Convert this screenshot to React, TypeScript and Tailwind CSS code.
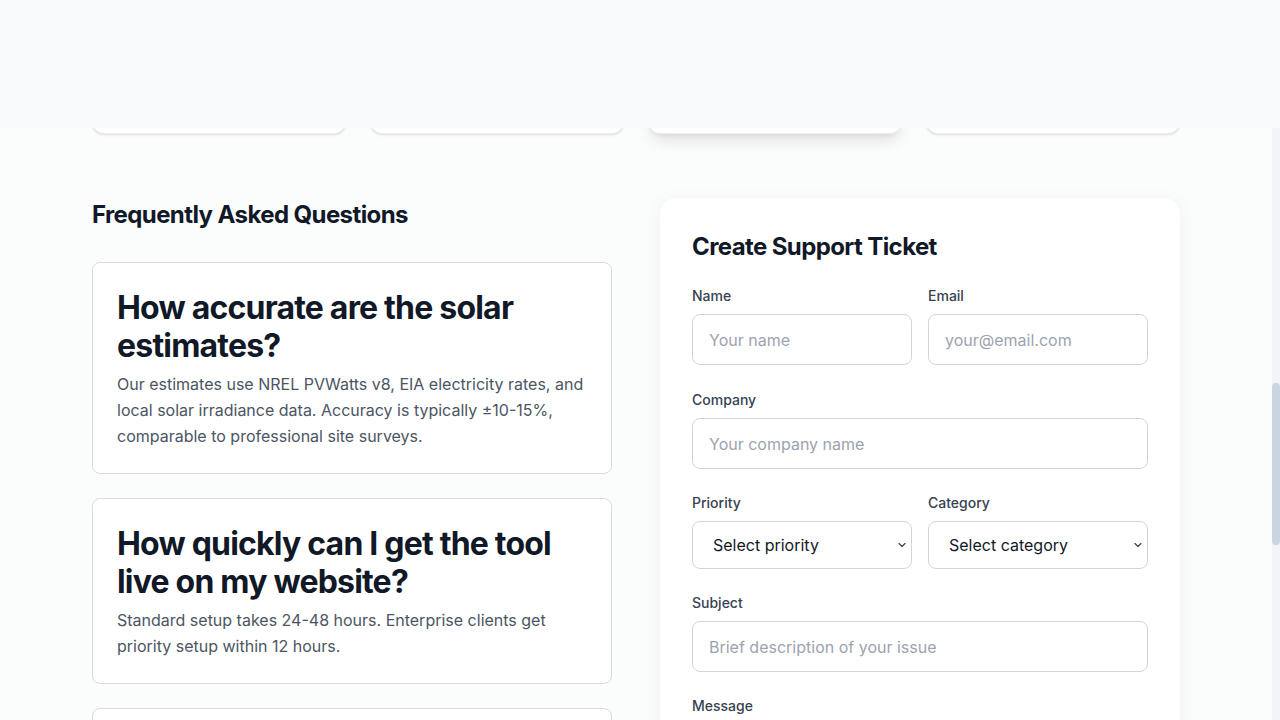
import React from "react";

const faqs = [
  {
    q: "How accurate are the solar estimates?",
    a: "Our estimates use NREL PVWatts v8, EIA electricity rates, and local solar irradiance data. Accuracy is typically ±10-15%, comparable to professional site surveys.",
  },
  {
    q: "How quickly can I get the tool live on my website?",
    a: "Standard setup takes 24-48 hours. Enterprise clients get priority setup within 12 hours.",
  },
  {
    q: "Can I customize the calculator to match my brand?",
    a: "Yes. Colors, logos, fonts and copy can all be customized to match your website.",
  },
];

function Label({ children }: { children: React.ReactNode }) {
  return <label className="mb-2 block text-sm font-medium leading-5 text-[#374151]">{children}</label>;
}

function Input({ placeholder }: { placeholder: string }) {
  return (
    <input
      placeholder={placeholder}
      className="block h-[51px] w-full rounded-lg border border-[#d1d5db] bg-white px-4 text-base text-[#111827] placeholder:text-[#9ca3af] outline-none"
    />
  );
}

function Select({ label }: { label: string }) {
  return (
    <div className="relative">
      <select className="block h-[48px] w-full appearance-none rounded-lg border border-[#d1d5db] bg-white pl-5 pr-8 text-base text-[#111827] outline-none">
        <option>{label}</option>
      </select>
      <svg
        className="pointer-events-none absolute right-[6px] top-1/2 -translate-y-1/2"
        width="8"
        height="5"
        viewBox="0 0 8 5"
        fill="none"
      >
        <path d="M1 1l3 3 3-3" stroke="#374151" strokeWidth="1.2" strokeLinecap="round" strokeLinejoin="round" />
      </svg>
    </div>
  );
}

export default function App() {
  return (
    <div className="flex h-screen w-full flex-col overflow-hidden bg-[#fbfcfc]" style={{ fontFamily: "Inter, 'Noto Sans', sans-serif" }}>
      <div className="h-32 w-full shrink-0 bg-[#f9fafb]" />
      <div className="flex min-h-0 flex-1">
        <div className="min-w-0 flex-1 overflow-hidden">
          <div className="mx-auto max-w-6xl px-8 -mt-[194px]">
            <div className="grid grid-cols-4 gap-6">
              <div className="h-[200px] rounded-xl border border-[#eceef1] bg-white shadow-sm" />
              <div className="h-[200px] rounded-xl border border-[#eceef1] bg-white shadow-sm" />
              <div className="h-[200px] rounded-xl border border-[#eceef1] bg-white shadow-lg" />
              <div className="h-[200px] rounded-xl border border-[#eceef1] bg-white shadow-sm" />
            </div>
            <div className="grid grid-cols-2 gap-12 pt-16">
              <div>
                <h2 className="mb-[31px] pt-px text-2xl font-bold leading-8 tracking-tight text-[#111827]">Frequently Asked Questions</h2>
                <div className="flex flex-col gap-6">
                  {faqs.map((f) => (
                    <div key={f.q} className="rounded-lg border border-[#d9dce1] bg-white p-6">
                      <h3 className="mb-1.5 pt-0.5 text-[32px] font-bold leading-[38px] tracking-tight text-[#111827]">{f.q}</h3>
                      <p className="text-base leading-[26px] text-[#4b5563]">{f.a}</p>
                    </div>
                  ))}
                </div>
              </div>
              <div className="rounded-2xl bg-white px-8 pb-8 pt-[33px] shadow-[0_4px_20px_rgba(0,0,0,0.05)]">
                <h2 className="mb-[23px] text-2xl font-bold leading-8 tracking-tight text-[#111827]">Create Support Ticket</h2>
                <div className="flex flex-col gap-6">
                  <div className="mb-px grid grid-cols-2 gap-4">
                    <div>
                      <Label>Name</Label>
                      <Input placeholder="Your name" />
                    </div>
                    <div>
                      <Label>Email</Label>
                      <Input placeholder="your@email.com" />
                    </div>
                  </div>
                  <div>
                    <Label>Company</Label>
                    <Input placeholder="Your company name" />
                  </div>
                  <div className="grid grid-cols-2 gap-4">
                    <div>
                      <Label>Priority</Label>
                      <Select label="Select priority" />
                    </div>
                    <div>
                      <Label>Category</Label>
                      <Select label="Select category" />
                    </div>
                  </div>
                  <div>
                    <Label>Subject</Label>
                    <Input placeholder="Brief description of your issue" />
                  </div>
                  <div>
                    <Label>Message</Label>
                    <textarea
                      rows={5}
                      placeholder="Describe your issue in detail"
                      className="block w-full rounded-lg border border-[#d1d5db] bg-white px-4 py-3 text-base outline-none placeholder:text-[#9ca3af]"
                    />
                  </div>
                </div>
              </div>
            </div>
          </div>
        </div>
        <div className="flex w-2 shrink-0 flex-col bg-[#f1f5f9]">
          <div className="mt-[255px] h-[162px] w-2 rounded-full bg-[#cbd5e1]" />
        </div>
      </div>
    </div>
  );
}
